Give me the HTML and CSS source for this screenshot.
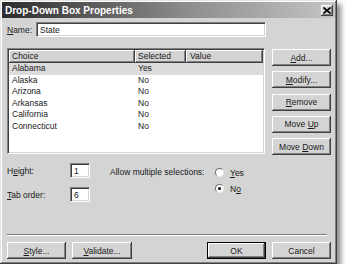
FILE: index.html
```html
<!DOCTYPE html>
<html lang="en">
<head>
    <meta charset="UTF-8">
    <title>Drop-Down Box Properties</title>
    <link rel="stylesheet" href="styles.css">
</head>
<body>
    <div class="dialog">
        <div class="titlebar">
            <span class="title">Drop-Down Box Properties</span>
            <span class="close-btn">
                <svg width="8" height="7" viewBox="0 0 8 7">
                    <path d="M0.5 0.5 L7.5 6.5 M7.5 0.5 L0.5 6.5" stroke="#000" stroke-width="1.6"/>
                </svg>
            </span>
        </div>

        <div class="content">
            <div class="name-row">
                <span class="label name-label"><u>N</u>ame:</span>
                <div class="field name-field">State</div>
            </div>

            <div class="main">
                <div class="listbox">
                    <div class="list-head">
                        <span class="col col-choice">Choice</span>
                        <span class="col col-selected">Selected</span>
                        <span class="col col-value">Value</span>
                    </div>
                    <div class="list-row active">
                        <span class="cell col-choice">Alabama</span><span class="cell col-selected">Yes</span><span class="cell col-value"></span>
                    </div>
                    <div class="list-row">
                        <span class="cell col-choice">Alaska</span><span class="cell col-selected">No</span><span class="cell col-value"></span>
                    </div>
                    <div class="list-row">
                        <span class="cell col-choice">Arizona</span><span class="cell col-selected">No</span><span class="cell col-value"></span>
                    </div>
                    <div class="list-row">
                        <span class="cell col-choice">Arkansas</span><span class="cell col-selected">No</span><span class="cell col-value"></span>
                    </div>
                    <div class="list-row">
                        <span class="cell col-choice">California</span><span class="cell col-selected">No</span><span class="cell col-value"></span>
                    </div>
                    <div class="list-row">
                        <span class="cell col-choice">Connecticut</span><span class="cell col-selected">No</span><span class="cell col-value"></span>
                    </div>
                </div>

                <div class="side-buttons">
                    <button class="btn"><u>A</u>dd...</button>
                    <button class="btn"><u>M</u>odify...</button>
                    <button class="btn"><u>R</u>emove</button>
                    <button class="btn">Move <u>U</u>p</button>
                    <button class="btn">Move <u>D</u>own</button>
                </div>
            </div>

            <div class="options">
                <div class="small-fields">
                    <div class="opt-row">
                        <span class="label opt-label">H<u>e</u>ight:</span>
                        <div class="field small-field">1</div>
                    </div>
                    <div class="opt-row">
                        <span class="label opt-label"><u>T</u>ab order:</span>
                        <div class="field small-field">6</div>
                    </div>
                </div>
                <div class="multi">
                    <span class="label multi-label">Allow multiple selections:</span>
                    <div class="radios">
                        <div class="radio-row"><span class="radio"></span><span class="label"><u>Y</u>es</span></div>
                        <div class="radio-row"><span class="radio checked"></span><span class="label">N<u>o</u></span></div>
                    </div>
                </div>
            </div>

            <div class="separator"></div>

            <div class="footer">
                <button class="btn"><u>S</u>tyle...</button>
                <button class="btn btn-validate"><u>V</u>alidate...</button>
                <span class="spacer"></span>
                <button class="btn btn-default">OK</button>
                <button class="btn">Cancel</button>
            </div>
        </div>
    </div>
</body>
</html>
```

FILE: styles.css
```css
body {
    margin: 0;
    background: #fff;
    font-family: "Liberation Sans", Arial, sans-serif;
    font-size: 8.5px;
    color: #1a1a1a;
}
u { text-decoration: underline; text-underline-offset: 1px; }

.dialog {
    width: 337px;
    height: 264px;
    box-sizing: border-box;
    padding: 2px;
    background: #d4d4d4;
    box-shadow: inset -1px -1px #404040, inset 1px 1px #e4e4e4,
                inset -2px -2px #808080, inset 2px 2px #fff,
                4px 4px 5px rgba(0,0,0,0.45);
}

.titlebar {
    height: 16px;
    display: flex;
    align-items: center;
    justify-content: space-between;
    padding: 0 2px 0 3px;
    background: linear-gradient(to right, #2c2c2c, #8c8c8c 55%, #c4c4c4);
}
.title {
    color: #fff;
    font-weight: bold;
    font-size: 10px;
}
.close-btn {
    width: 12px;
    height: 11px;
    box-sizing: border-box;
    display: flex;
    align-items: center;
    justify-content: center;
    background: #d4d4d4;
    box-shadow: inset -1px -1px #404040, inset 1px 1px #fff, inset -2px -2px #808080;
}

.content {
    padding: 0 4px 0 5px;
}

.label { white-space: nowrap; }

.field {
    background: #fff;
    box-sizing: border-box;
    height: 15px;
    padding: 0 3px;
    line-height: 14px;
    border: 1px solid;
    border-color: #808080 #fff #fff #808080;
    box-shadow: inset 1px 1px #404040, inset -1px -1px #d4d4d4;
}

.name-row {
    display: flex;
    align-items: center;
    margin-top: 4px;
}
.name-label { width: 29px; }
.name-field { width: 230px; }

.main {
    display: flex;
    margin-top: 11px;
}
.listbox {
    width: 258px;
    height: 106px;
    box-sizing: border-box;
    background: #fff;
    border: 1px solid;
    border-color: #808080 #fff #fff #808080;
    box-shadow: inset 1px 1px #404040, inset -1px -1px #d4d4d4;
    padding: 1px;
}
.list-head {
    display: flex;
    height: 13px;
}
.col {
    box-sizing: border-box;
    background: #d4d4d4;
    line-height: 12px;
    box-shadow: inset -1px -1px #404040, inset 1px 1px #fff, inset -2px -2px #808080;
}
.col-choice { width: 126px; padding-left: 3px; }
.col-selected { width: 51px; padding-left: 3px; }
.col-value { width: 77px; padding-left: 4px; }

.list-row {
    display: flex;
    height: 11.5px;
    line-height: 11.5px;
}
.list-row.active { background: #dcdcdc; }
.cell { box-sizing: border-box; }

.side-buttons {
    display: flex;
    flex-direction: column;
    gap: 5.3px;
    margin: 1px 0 0 7px;
}

.btn {
    width: 59px;
    height: 17px;
    padding: 0;
    border: none;
    background: #d4d4d4;
    font-family: inherit;
    font-size: 8.5px;
    color: #1a1a1a;
    box-shadow: inset -1px -1px #404040, inset 1px 1px #fff, inset -2px -2px #808080;
}
.btn-default {
    box-shadow: inset 0 0 0 1px #000, inset -2px -2px #404040, inset 2px 2px #fff, inset -3px -3px #808080;
}

.options {
    display: flex;
    margin-top: 8px;
    height: 71px;
}
.small-fields {
    display: flex;
    flex-direction: column;
    gap: 9px;
}
.opt-row {
    display: flex;
    align-items: center;
}
.opt-label { width: 63px; }
.small-field { width: 20px; }

.multi {
    display: flex;
    margin-left: 20px;
    padding-top: 4px;
}
.multi-label { width: 105px; }
.radios {
    display: flex;
    flex-direction: column;
    gap: 5px;
}
.radio-row {
    display: flex;
    align-items: center;
    height: 11px;
    gap: 6px;
}
.radio {
    width: 9px;
    height: 9px;
    box-sizing: border-box;
    border-radius: 50%;
    background: #fff;
    border: 1px solid;
    border-color: #707070 #e8e8e8 #e8e8e8 #707070;
    display: flex;
    align-items: center;
    justify-content: center;
}
.radio.checked::after {
    content: "";
    width: 3px;
    height: 3px;
    border-radius: 50%;
    background: #000;
}

.separator {
    width: 320px;
    height: 0;
    border-top: 1px solid #808080;
    border-bottom: 1px solid #fff;
}

.footer {
    display: flex;
    margin-top: 6px;
}
.btn-validate { width: 60px; margin-left: 6px; }
.spacer { flex: 1; }
.btn-default { margin-right: 6px; }
```
